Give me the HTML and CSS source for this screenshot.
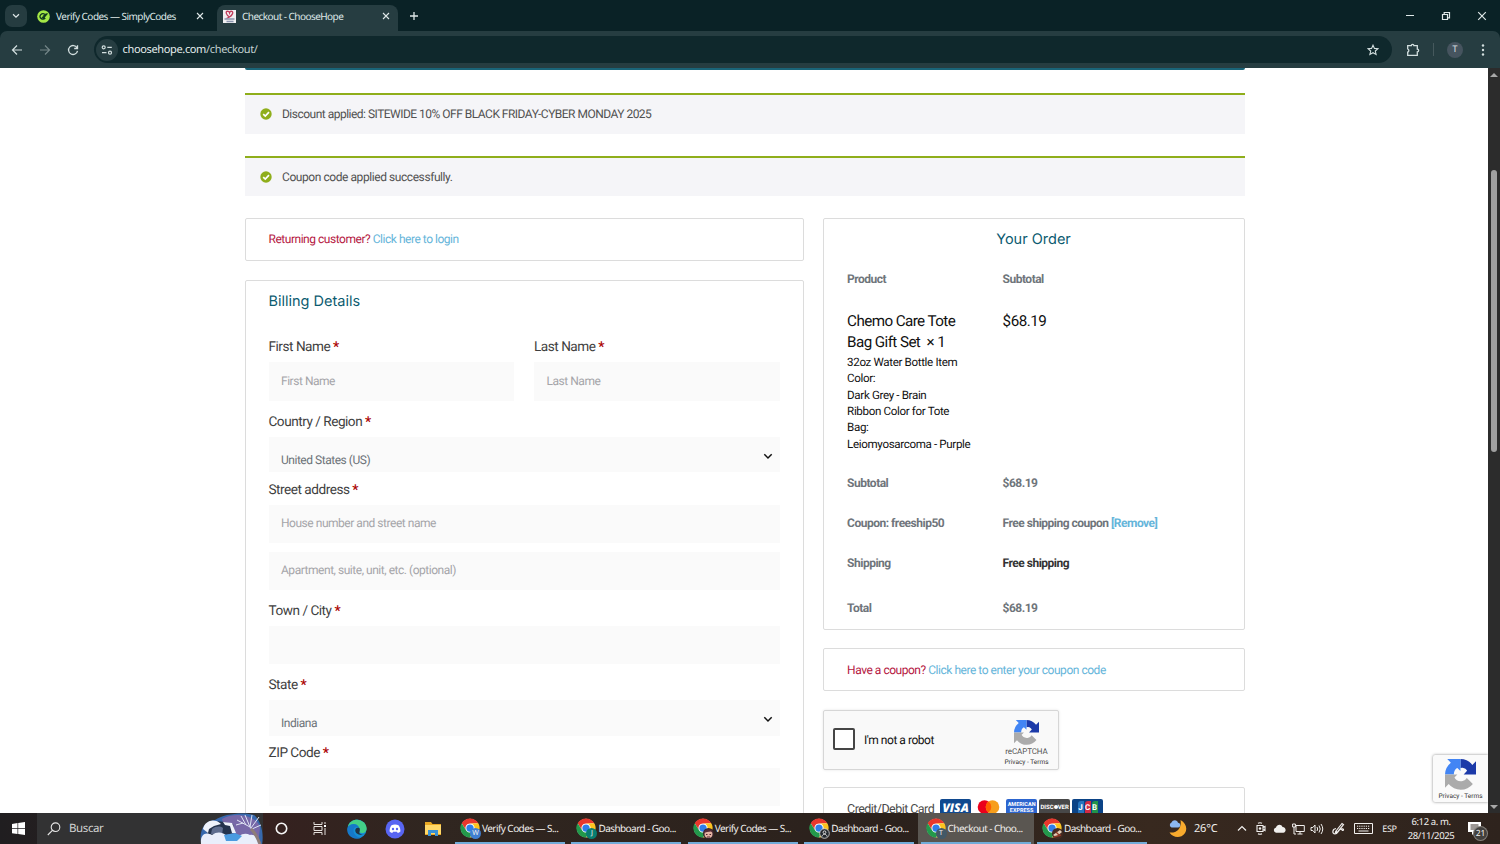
FILE: index.html
```html
<!DOCTYPE html>
<html lang="en">
<head>
<meta charset="utf-8">
<title>Checkout - ChooseHope</title>
<link rel="stylesheet" href="styles.css">
</head>
<body>
<svg class="defs" aria-hidden="true">
  <symbol id="chrome" viewBox="0 0 48 48">
    <circle cx="24" cy="24" r="22" fill="#fff"/>
    <path d="M4.070 12.500A23 23 0 0 1 43.900 12.500L24 13A11 11 0 0 0 14.500 29.500Z" fill="#e8372c"/>
    <path d="M43.900 12.500A23 23 0 0 1 24 47L33.500 29.500A11 11 0 0 0 24 13Z" fill="#fcc31e"/>
    <path d="M24 47A23 23 0 0 1 4.070 12.500L14.500 29.500A11 11 0 0 0 33.500 29.500Z" fill="#23994b"/>
    <circle cx="24" cy="24" r="8.700" fill="#2f7de9"/>
  </symbol>
  <symbol id="recaptcha" viewBox="0 0 64 64">
    <path d="M64 31.960V4.600l-7.600 7.600A32 32 0 0 0 31.900 0v18.400a14 14 0 0 1 4.300-.4c5 .5 8 3.500 9.400 6.500L38.500 32Z" fill="#1c3aa9"/>
    <path d="M31.900 0H4.600l7.500 7.600A32 32 0 0 0 0 32h18.400a14 14 0 0 1 .4-4.400c1-5 3.800-8 6.700-9.200L31.900 25Z" fill="#4285f4"/>
    <path d="M0 32v27.400l7.600-7.600A32 32 0 0 0 57.500 51.500L45 39a14 14 0 0 1-8.500 6.600c-9 2-14-3-17-7.600L25.500 32Z" fill="#ababab"/>
  </symbol>
  <symbol id="check" viewBox="0 0 12 12">
    <circle cx="6" cy="6" r="5.700" fill="#8fae1b"/>
    <path d="m3.200 6.100 2.100 2 3.700-3.900" fill="none" stroke="#fff" stroke-width="1.700"/>
  </symbol>
  <symbol id="close" viewBox="0 0 8 8"><path d="m1 1 6 6M7 1 1 7" stroke="currentColor" stroke-width="1.100" fill="none"/></symbol>
  <symbol id="down" viewBox="0 0 10 7"><path d="m1.300 1.300 3.700 3.700 3.700-3.700" fill="none" stroke="currentColor" stroke-width="1.500"/></symbol>
</svg>

<header class="tabstrip">
  <div class="tab-search"><svg width="8" height="6"><use href="#down"/></svg></div>
  <div class="tab">
    <svg width="13" height="13" viewBox="0 0 13 13"><circle cx="6.500" cy="6.500" r="6.300" fill="#a4e846"/><path d="M8 4.500A3 2.600 0 1 0 8.300 8M5 7l1.500 1 4-4.700M6 6.500l3.500-2.800" fill="none" stroke="#12391e" stroke-width="1.300"/></svg>
    <span class="tab-title">Verify Codes — SimplyCodes</span>
    <svg class="tab-x" width="8" height="8"><use href="#close"/></svg>
  </div>
  <div class="tab tab-active">
    <svg width="13" height="13" viewBox="0 0 13 13"><path fill="#f1eff2" d="M0 0h13v13H0z"/><path d="M6.500 7C3 5 2.200 1.300 4.500 1.200c1.200 0 1.800 1 2 1.600.2-1 1.200-1.700 2.300-1.500C11 2 9 5.500 6.500 7L3.500 8.500" fill="none" stroke="#c13b5b" stroke-width="1.300"/><path d="M1.500 9h10M3.500 11.500h7" stroke="#8b94ad" stroke-width="1.300"/></svg>
    <span class="tab-title">Checkout - ChooseHope</span>
    <svg class="tab-x" width="8" height="8"><use href="#close"/></svg>
  </div>
  <svg class="new-tab" width="10" height="10" viewBox="0 0 10 10"><path d="M5 1v8M1 5h8" stroke="currentColor" stroke-width="1.300"/></svg>
  <div class="window-controls">
    <svg width="10" height="10" viewBox="0 0 10 10"><path d="M1 4.500h8" stroke="currentColor"/></svg>
    <svg width="10" height="10" viewBox="0 0 10 10"><path d="M1.500 3.500h5v5h-5zM3.200 3.200V1.500h5.300v5.300H6.800" fill="none" stroke="currentColor" stroke-width="1.200"/></svg>
    <svg width="10" height="10" viewBox="0 0 10 10"><path d="m1.200 1.200 7.600 7.600M8.800 1.200 1.200 8.800" stroke="currentColor" stroke-width="1.200"/></svg>
  </div>
</header>

<nav class="toolbar">
  <div class="nav-buttons">
    <svg width="12" height="12" viewBox="0 0 12 12"><path d="M11 6H1.600M6 1.500 1.500 6 6 10.500" fill="none" stroke="currentColor" stroke-width="1.200"/></svg>
    <svg class="dim" width="12" height="12" viewBox="0 0 12 12"><path d="M1 6h9.400M6 1.500 10.500 6 6 10.500" fill="none" stroke="currentColor" stroke-width="1.200"/></svg>
    <svg width="12" height="12" viewBox="0 0 12 12"><path d="M10 3.800A4.500 4.500 0 1 0 10.500 6.800M10.500 1.200v3.300H7.200" fill="none" stroke="currentColor" stroke-width="1.300"/></svg>
  </div>
  <div class="omnibox">
    <div class="site-info"><svg width="12" height="10" viewBox="0 0 12 10"><g fill="none" stroke="currentColor" stroke-width="1.200"><circle cx="2.700" cy="2.300" r="1.500"/><path d="M6.300 2.300h4.500M1 7.700h4.500"/><circle cx="9" cy="7.700" r="1.500"/></g></svg></div>
    <span class="url">choosehope.com<span class="path">/checkout/</span></span>
    <svg class="star" width="12" height="12" viewBox="0 0 12 12"><path d="m6 1.200 1.450 3.200 3.500.35-2.650 2.300.8 3.450L6 8.700 2.900 10.500l.8-3.450-2.650-2.300 3.500-.35Z" fill="none" stroke="currentColor" stroke-width="1.100"/></svg>
  </div>
  <svg class="puzzle" width="14" height="14" viewBox="0 0 14 14"><path d="M1.700 2.700h3.600a1.300 1.300 0 0 1 2.600 0h3.400v3.500a1.300 1.300 0 0 1 0 2.700v3.400H1.700V9.200a1.700 1.700 0 0 0 0-3.200Z" fill="none" stroke="currentColor" stroke-width="1.300"/></svg>
  <i class="sep"></i>
  <span class="avatar">T</span>
  <svg class="kebab" width="4" height="14" viewBox="0 0 4 14"><g fill="currentColor"><circle cx="2" cy="2.500" r="1.200"/><circle cx="2" cy="7" r="1.200"/><circle cx="2" cy="11.500" r="1.200"/></g></svg>
</nav>

<div class="viewport">
  <main class="page">
    <div class="banner"></div>
    <div class="notice"><svg width="12" height="12"><use href="#check"/></svg><span>Discount applied: SITEWIDE 10% OFF BLACK FRIDAY-CYBER MONDAY 2025</span></div>
    <div class="notice"><svg width="12" height="12"><use href="#check"/></svg><span>Coupon code applied successfully.</span></div>
    <div class="columns">
      <section class="left">
        <div class="box toggle"><span class="ask">Returning customer?</span> <a>Click here to login</a></div>
        <form class="box billing">
          <h3>Billing Details</h3>
          <div class="pair">
            <div><label>First Name <b>*</b></label><div class="input tall">First Name</div></div>
            <div><label>Last Name <b>*</b></label><div class="input tall">Last Name</div></div>
          </div>
          <div class="field gap5"><label>Country / Region <b>*</b></label><div class="select">United States (US)<svg width="10" height="7"><use href="#down"/></svg></div></div>
          <div class="field gap2"><label>Street address <b>*</b></label><div class="input">House number and street name</div><div class="input second">Apartment, suite, unit, etc. (optional)</div></div>
          <div class="field gap5"><label>Town / City <b>*</b></label><div class="input"></div></div>
          <div class="field gap5"><label>State <b>*</b></label><div class="select state">Indiana<svg width="10" height="7"><use href="#down"/></svg></div></div>
          <div class="field gap1"><label>ZIP Code <b>*</b></label><div class="input"></div></div>
        </form>
      </section>
      <section class="right">
        <div class="box order">
          <h3>Your Order</h3>
          <div class="row head"><span>Product</span><span>Subtotal</span></div>
          <div class="row item">
            <div><div class="name">Chemo Care Tote<br>Bag Gift Set&nbsp; × 1</div>
            <div class="meta">32oz Water Bottle Item<br>Color:<br>Dark Grey - Brain<br>Ribbon Color for Tote<br>Bag:<br>Leiomyosarcoma - Purple</div></div>
            <div class="name price">$68.19</div>
          </div>
          <div class="row"><span>Subtotal</span><span>$68.19</span></div>
          <div class="row"><span>Coupon: freeship50</span><span>Free shipping coupon <a>[Remove]</a></span></div>
          <div class="row"><span>Shipping</span><span class="dark">Free shipping</span></div>
          <div class="row total"><span>Total</span><span>$68.19</span></div>
        </div>
        <div class="box toggle"><span class="ask">Have a coupon?</span> <a>Click here to enter your coupon code</a></div>
        <div class="captcha">
          <i class="checkbox"></i><span class="robot">I'm not a robot</span>
          <div class="brand"><svg width="25" height="25"><use href="#recaptcha"/></svg><span class="rc">reCAPTCHA</span><span class="pt">Privacy - Terms</span></div>
        </div>
        <div class="box payment">
          <span>Credit/Debit Card</span>
          <div class="card visa">VISA</div>
          <div class="card mc"><svg width="31" height="20" viewBox="0 0 31 20"><circle cx="11.500" cy="8" r="6.800" fill="#eb001b"/><circle cx="19.500" cy="8" r="6.800" fill="#f79e1b"/><path d="M15.500 2.500a6.800 6.800 0 0 1 0 11 6.800 6.800 0 0 1 0-11" fill="#ff5f00"/></svg></div>
          <div class="card amex">AMERICAN<br>EXPRESS</div>
          <div class="card disc">DISC<i></i>VER</div>
          <div class="card jcb"><i>J</i><i>C</i><i>B</i></div>
        </div>
      </section>
    </div>
  </main>
  <div class="scrollbar"><i class="up"></i><i class="thumb"></i><i class="dn"></i></div>
  <div class="badge"><svg width="31" height="31"><use href="#recaptcha"/></svg><span>Privacy - Terms</span></div>
</div>

<footer class="taskbar">
  <div class="start"><svg width="13" height="13" viewBox="0 0 13 13"><path d="M0 2 5.500 1.100V6.200H0ZM6.200 1 13 0v6.200H6.200ZM0 6.900h5.500V12L0 11.200ZM6.200 6.900H13V13l-6.800-.9Z" fill="#fff"/></svg></div>
  <div class="search">
    <svg width="14" height="14" viewBox="0 0 14 14"><circle cx="8.500" cy="5.200" r="4.300" fill="none" stroke="#e6e6e6" stroke-width="1.100"/><path d="m5.400 8.400-4.600 4.600" stroke="#e6e6e6" stroke-width="1.100"/></svg>
    <span>Buscar</span>
    <svg class="scene" width="63" height="31" viewBox="0 0 63 31">
      <path d="M1 29C-1 18 4 8 15 7 24 0 46-1 54 2c7 5 10 19 8 29H1Z" fill="#3768ad"/>
      <path d="M22 6c12-8 36-4 38 9L58 31H28Z" fill="#7768a8"/>
      <path d="M5 17c2-9 12-10 19-8l9 2 2 9-24 5Z" fill="#24334d"/>
      <path d="M3 16c2-9 12-11 18-5l-7 2-5 3-1 4ZM23 9l9 1 4 10h-4l-2-7-5-1Z" fill="#eef2fb"/>
      <path d="M12 16c4-3 8-3 11-1l-1 7-11-1Z" fill="#5f6d8f"/>
      <path d="M1 31c-1-9 4-13 11-9 5-4 11-3 15 1 6-4 12 0 12 8ZM36 31c1-10 9-12 14-9 5-1 8 3 8 9Z" fill="#e9eefb"/>
      <path d="m24 22 11-2 7 3-5 5H26Z" fill="#4a9be0"/>
      <path d="M59 31c-3-7-5-12-9-17M50 14 37 7M50 14 45 2M50 14l2-12M51 15l8-11M52 16l9-4M43 10l-7 2M46 12l-5-9" stroke="#dfe4f4" fill="none"/>
      <path d="M60 31c-3-7-5-12-9-15" stroke="#8d7c78" stroke-width="3" fill="none"/>
    </svg>
  </div>
  <div class="pins">
    <svg width="13" height="13" viewBox="0 0 13 13"><circle cx="6.500" cy="6.500" r="5.200" fill="none" stroke="#f5f5f5" stroke-width="1.600"/></svg>
    <svg width="14" height="13" viewBox="0 0 14 13"><path d="M1 0v2.500h8V0M1 13v-2.500h8V13M1 4.500h8v4H1ZM12 0v2M12 6v7" fill="none" stroke="#e5e0dc"/><path d="M11 3h2v2h-2z" fill="#fff"/></svg>
    <svg width="20" height="20" viewBox="0 0 20 20"><circle cx="10" cy="10" r="9.500" fill="#168ed4"/><path d="M.7 8C2 2 8-.5 13 1.200c5 1.800 7.500 6 6.400 10-1 3-5.400 3.500-6.900 2-1-1 .5-1.500 0-3.700C11.500 5 4 3.500.7 8Z" fill="#43cf88"/><path d="M.7 8C4 4 10 4 12 8.500c-3-1.500-6 0-5.500 4 .4 3 4 6.500 8 5.900C8 22-2 17 .7 8Z" fill="#1678c9"/><path d="M12.500 9c-3-1.200-5 1-4 3.800 1 3 6 4 10 1.200-2 2-6.500 1.200-6.200-.5.200-1 1-2 .2-4.500Z" fill="#203345"/></svg>
    <svg width="20" height="20" viewBox="0 0 20 20"><circle cx="10" cy="10" r="9.500" fill="#5865f2"/><path d="M6.500 6.200c2-.9 5-.9 7 0 1.500 2 2 4 1.900 6.300-.8.800-1.700 1.200-2.700 1.400l-.7-1.200H8l-.7 1.200c-1-.2-1.900-.6-2.700-1.400-.1-2.300.4-4.300 1.900-6.300Z" fill="#fff"/><circle cx="8" cy="10" r="1.200" fill="#5865f2"/><circle cx="12" cy="10" r="1.200" fill="#5865f2"/></svg>
    <svg width="18" height="16" viewBox="0 0 18 16"><path d="M1 1h6l1.500 2H17v11H1Z" fill="#e9a823"/><path d="M1 4h16v9H1Z" fill="#ffd869"/><path d="M4 9h10v6h-3v-3H7v3H4Z" fill="#3a91d5"/></svg>
  </div>
  <div class="apps">
    <div class="app"><span class="ico"><svg width="20" height="20"><use href="#chrome"/></svg><i class="p1">W</i></span>Verify Codes — S...</div>
    <div class="app"><span class="ico"><svg width="20" height="20"><use href="#chrome"/></svg><i class="p2">J</i></span>Dashboard - Goo...</div>
    <div class="app"><span class="ico"><svg width="20" height="20"><use href="#chrome"/></svg><i class="p3"><svg width="11" height="11" viewBox="0 0 11 11"><circle cx="5.500" cy="6" r="4" fill="#e5b3a3"/><path d="M1 5C1 0 10 0 10 5L8 3.500 4 4Z" fill="#542b35"/><path d="M3 6.500h1.500M6.500 6.500H8M4 9h3" stroke="#54272c"/></svg></i></span>Verify Codes — S...</div>
    <div class="app"><span class="ico"><svg width="20" height="20"><use href="#chrome"/></svg><i class="p4"><svg width="11" height="11" viewBox="0 0 11 11"><circle cx="5.500" cy="5.500" r="4.800" fill="#24292e" stroke="#ddd" stroke-width=".8"/><circle cx="5.500" cy="4.300" r="1.400" fill="none" stroke="#ddd"/><path d="M3 8.500c.5-3 4.500-3 5 0" fill="none" stroke="#ddd"/></svg></i></span>Dashboard - Goo...</div>
    <div class="app app-active"><span class="ico"><svg width="20" height="20"><use href="#chrome"/></svg><i class="p5">T</i></span>Checkout - Choo...</div>
    <div class="app"><span class="ico"><svg width="20" height="20"><use href="#chrome"/></svg><i class="p6"><svg width="11" height="11" viewBox="0 0 11 11"><path d="m1 7 7-5 2 2-6 5Z" fill="#e1ceb8"/><path d="m2 9 7-2M4 4l3 3" stroke="#903926" stroke-width="1.400"/></svg></i></span>Dashboard - Goo...</div>
  </div>
  <div class="weather">
    <svg width="19" height="19" viewBox="0 0 19 19"><path d="M12.500 1C20 5 20 14 13.500 17.200 9 19 4 17.500 1.500 13.500 9 14.500 14 9 12.500 1Z" fill="#f8aa2d"/><path d="M3.500 8.500a2.700 2.700 0 0 1 0-5C5 0 9.500.7 10 3.700c3 .3 3 4.600 0 4.800Z" fill="#8cb8f0"/></svg>
    <span>26°C</span>
  </div>
  <div class="tray">
    <svg width="10" height="7" viewBox="0 0 10 7"><path d="m1 5.500 4-4 4 4" fill="none" stroke="currentColor" stroke-width="1.200"/></svg>
    <svg width="10" height="13" viewBox="0 0 10 13"><path d="M1 3.500h6v6H1ZM7 5.500l2-1v4l-2-1M2 1.200q2-1 4 0M2 11.800q2 1 4 0" fill="none" stroke="currentColor" stroke-width="1.100"/><circle cx="4" cy="6.500" r="1.200" fill="currentColor"/></svg>
    <svg width="13" height="9" viewBox="0 0 13 9"><path d="M3 8.700a2.700 2.700 0 0 1 0-5.300C4 0 8.500-.2 9.500 3c4 0 4 5.500.8 5.700Z" fill="#f0efed"/></svg>
    <svg width="13" height="12" viewBox="0 0 13 12"><path d="M4 2.500h8.300v6H4ZM8 8.500V11M5.500 11h5M.6 1h2.800v3H.6ZM2 4v7h2" fill="none" stroke="currentColor"/></svg>
    <svg width="14" height="12" viewBox="0 0 14 12"><path d="M1 4.500h1.800L5 2v8L2.800 7.500H1ZM7 4q1.300 2 0 4M9 2.500q2.500 3.500 0 7M11 1q3.500 5 0 10" fill="none" stroke="currentColor"/></svg>
    <svg width="13" height="14" viewBox="0 0 13 14"><path d="M4 9 10 1.500l1.500 1.200L6 9.500 3.500 10.500ZM4 6.500C0 7 0 12 3 12s3-4 6-5 3 1.500 1.500 1.500L8 6" fill="none" stroke="currentColor" stroke-width="1.200"/></svg>
    <svg width="19" height="11" viewBox="0 0 19 11"><path d="M.5.500h18v10H.5Z" fill="none" stroke="currentColor"/><path d="M3 3.200h13M3 5.500h13" stroke="currentColor" stroke-dasharray="1.200 1"/><path d="M4.500 8h10" stroke="currentColor"/></svg>
    <span class="lang">ESP</span>
    <div class="clock">6:12 a. m.<br>28/11/2025</div>
    <div class="notif"><svg width="13" height="13" viewBox="0 0 13 13"><path d="M0 0h13v10H7l-3 3v-3H0Z" fill="#fff"/><path d="M2.500 3h8M2.500 5h8M2.500 7h5" stroke="#3b302b"/></svg><i>21</i></div>
  </div>
</footer>
</body>
</html>
```

FILE: styles.css
```css
* { box-sizing: border-box; }
body { margin: 0; width: 1500px; height: 844px; overflow: hidden; display: flex; flex-direction: column; background: #fff; font-family: Roboto, sans-serif; text-rendering: geometricPrecision; }
svg { display: block; flex: none; }
i { font-style: normal; }
.defs { position: absolute; width: 0; height: 0; }

/* browser chrome */
.tabstrip { position: relative; z-index: 1; height: 31px; flex: none; display: flex; align-items: center; background: #0a2226; color: #dfe8e8; font: 10px "Noto Sans", sans-serif; padding-left: 5px; }
.tab-search { width: 22px; height: 22px; border-radius: 7px; background: #253c40; display: flex; align-items: center; justify-content: center; margin-right: 4px; }
.tab { width: 186px; height: 26px; margin-top: 5px; padding: 0 13px 4px 6px; display: flex; align-items: center; gap: 6px; }
.tab-title { flex: 1; white-space: nowrap; letter-spacing: -.53px; }
.tab-active { width: 181px; padding-right: 8px; background: #263d41; border-radius: 8px 8px 0 0; }
.new-tab { margin-left: 11px; }
.window-controls { margin-left: auto; display: flex; gap: 26px; padding-right: 13px; }
.toolbar { height: 37px; flex: none; display: flex; align-items: center; background: #263d41; color: #d3dfdf; border-radius: 7px 7px 0 0; box-shadow: 0 -8px 0 #0a2226; padding-left: 11px; }
.nav-buttons { display: flex; gap: 16px; width: 83px; }
.dim { opacity: .45; }
.omnibox { width: 1298px; height: 27px; border-radius: 14px; background: #0f282c; display: flex; align-items: center; padding: 0 13px 0 2px; }
.site-info { width: 22px; height: 22px; border-radius: 50%; background: #263d41; display: flex; align-items: center; justify-content: center; }
.url { flex: 1; margin-left: 4.500px; font: 11px "Noto Sans", sans-serif; letter-spacing: -.35px; color: #e6eeee; }
.path { color: #c3d1d1; }
.tab-active .tab-title { letter-spacing: -.55px; }
.puzzle { margin-left: 14px; }
.sep { width: 1px; height: 13px; background: #46595d; margin-left: 13px; }
.avatar { width: 16px; height: 16px; margin-left: 13px; border-radius: 50%; background: #46545f; color: #d9e0e5; font-size: 9px; line-height: 16px; text-align: center; }
.kebab { margin-left: 18px; }

/* page */
.viewport { position: relative; height: 745px; flex: none; overflow: hidden; display: flex; justify-content: space-between; }
.page { width: 1000px; margin-left: 244.500px; letter-spacing: -.47px; }
.banner { height: 2px; background: #1a6478; border-radius: 0 0 2px 2px; margin-bottom: 23px; }
.notice { height: 40.500px; border-top: 2.500px solid #8fae1b; background: #f5f5f8; display: flex; align-items: center; gap: 10.500px; padding: 0 0 0 15px; margin-bottom: 22px; font-size: 12px; letter-spacing: -.51px; color: #515151; }
.notice + .notice { letter-spacing: -.43px; }
.columns { display: flex; justify-content: space-between; align-items: flex-start; }
.left { width: 559.500px; }
.right { width: 422px; }
.box { border: 1px solid #dcdcdc; border-radius: 2px; }
.toggle { height: 43px; padding-left: 23px; font-size: 12px; line-height: 41px; margin-bottom: 19px; }
.ask { color: #b5173f; }
a { color: #65b5da; }
h3 { margin: 0; color: #0c5b70; font: 400 14.500px/41px Inter, sans-serif; letter-spacing: 0; }
.billing { height: 620px; padding: 0 23px; }
.billing h3 { height: 51px; }
.pair { display: grid; grid-template-columns: 245px 246px; justify-content: space-between; }
label { display: block; height: 31px; font-size: 13.600px; letter-spacing: -.48px; line-height: 32px; color: #3f3f3f; }
label b { color: #a00; }
.pair label { height: 30px; line-height: 31px; }
.input { height: 38px; background: #fafafa; padding-left: 12.500px; font-size: 12px; line-height: 37px; color: #a5a5a9; }
.tall { height: 39px; line-height: 38px; }
.second { margin-top: 9px; }
.select { height: 35px; background: #fafafa; padding: 9px 7px 0 12.500px; display: flex; justify-content: space-between; align-items: flex-start; font-size: 12px; line-height: 28px; color: #6c7278; }
.select svg { margin-top: 7px; color: #111; }
.state { height: 36px; }
.gap5 { margin-top: 5px; }
.gap2 { margin-top: 2px; }
.gap1 { margin-top: 1px; }

.order { height: 412px; padding: 0 23.600px; margin-bottom: 18.300px; }
.right .toggle { padding-left: 23.600px; line-height: 42px; margin-bottom: 18.500px; }
.order h3 { text-align: center; height: 40px; line-height: 42px; }
.row { display: grid; grid-template-columns: 155.500px 1fr; height: 40px; line-height: 40px; font-size: 12px; font-weight: 700; letter-spacing: -.5px; color: #6f757b; }
.row.item { height: 164px; font-weight: 400; color: #111; padding-top: 12px; }
.name { font-size: 15.200px; letter-spacing: -.58px; line-height: 21px; }
.price { letter-spacing: -.5px; }
.meta { font-size: 11.600px; letter-spacing: -.35px; line-height: 16.400px; padding-top: .8px; }
.row .dark { color: #333; }
.total { padding-top: 5px; }
.captcha { width: 236px; height: 60px; background: #f9f9f9; border: 1px solid #d6d6d6; border-radius: 2px; box-shadow: 0 0 3px rgba(0,0,0,.1); display: flex; align-items: center; padding-left: 9px; margin-bottom: 17px; }
.checkbox { width: 22px; height: 22px; border: 2px solid #454545; border-radius: 2px; background: #fff; margin-top: -2px; }
.robot { font-size: 12px; margin-left: 9.500px; color: #111; flex: 1; }
.brand { width: 62px; display: flex; flex-direction: column; align-items: center; padding-top: 6px; color: #555; letter-spacing: 0; }
.rc { font-size: 8px; line-height: 13px; letter-spacing: -.1px; }
.pt { font-size: 6.500px; line-height: 8px; color: #333; }
.payment { height: 60px; display: flex; align-items: flex-start; padding: 11px 23.600px; font-size: 12.500px; letter-spacing: -.5px; line-height: 22px; color: #4a4a4a; white-space: nowrap; }
.payment span { width: 93px; letter-spacing: -.55px; }
.card { width: 31px; height: 20px; margin-right: 2px; border-radius: 2px; overflow: hidden; color: #fff; text-align: center; font-weight: 700; letter-spacing: 0; }
.visa { background: #10498f; font: italic 800 12px/18px "Open Sans", sans-serif; }
.amex { background: #2c65cf; font-size: 5.500px; line-height: 6px; padding-top: 3px; }
.disc { background: #484848; font-size: 6px; line-height: 17px; }
.disc i { display: inline-block; width: 4px; height: 4px; border-radius: 50%; background: #fff; }
.jcb { background: #0b4386; display: flex; justify-content: center; gap: 1px; padding-top: 2px; }
.jcb i { width: 6px; height: 16px; font-size: 8px; line-height: 13px; background: #2674bd; border-radius: 3px 0 3px 0; }
.jcb i:nth-child(2) { background: #d32b45; }
.jcb i:nth-child(3) { background: #21944b; }

.scrollbar { width: 12px; background: #2c2c2c; display: flex; flex-direction: column; align-items: center; padding: 5px 0 4px; }
.up { border: 4px solid transparent; border-top: 0; border-bottom: 4px solid #a8a8a8; }
.dn { border: 4px solid transparent; border-bottom: 0; border-top: 4px solid #a8a8a8; margin-top: auto; }
.thumb { width: 6px; height: 282px; border-radius: 3px; background: #a0a0a0; margin-top: 93px; }
.badge { position: absolute; right: 12px; bottom: 11px; width: 55px; height: 47px; background: #fafafa; border-radius: 2px 0 0 2px; box-shadow: 0 0 3px #888; display: flex; flex-direction: column; align-items: center; padding-top: 4px; font-size: 6.500px; line-height: 12px; color: #333; clip-path: inset(-4px 0 -4px -4px); }

/* taskbar */
.taskbar { height: 31px; flex: none; display: flex; align-items: center; background: linear-gradient(90deg, #201e20 0, #35211f 270px, #302620 430px, #2b211c 900px, #38291f 1150px, #2e231d 1500px); color: #f2f0ee; font: 10px "Noto Sans", sans-serif; }
.start { width: 37px; padding-left: 12px; }
.search { width: 226px; height: 31px; background: #323233; display: flex; align-items: center; padding-left: 10px; color: #d2d2d2; font-size: 11.500px; letter-spacing: -.4px; }
.search span { margin-left: 8px; flex: 1; }
.pins { width: 192px; display: grid; grid-template-columns: repeat(5, 37.700px); place-items: center; }
.apps { width: 698px; display: grid; grid-template-columns: repeat(6, 110px); column-gap: 6.400px; }
.app { height: 31px; display: flex; align-items: center; gap: 2px; padding-left: 5px; border-bottom: 2px solid #72acd9; white-space: nowrap; font-size: 10px; letter-spacing: -.56px; }
.app-active { background: #5a5651; box-shadow: -3px 0 0 #5a5651, 3px 0 0 #5a5651; }
.ico { position: relative; width: 20px; height: 20px; }
.ico i { position: absolute; right: -1px; bottom: -1px; width: 11px; height: 11px; border-radius: 50%; text-align: center; font-size: 7px; line-height: 11px; letter-spacing: 0; }
.p1 { background: #3f7ed0; }
.p2 { background: #087d70; }
.p3 { background: #37262b; }
.p5 { background: #435967; }
.p6 { background: #442b22; }
.weather { width: 79px; display: flex; align-items: center; gap: 7px; padding-left: 15px; font-size: 11px; letter-spacing: -.2px; white-space: nowrap; }
.tray { display: grid; grid-template-columns: 19px 19px 18.500px 19px 19px 23px 27px 26px 57px 30px; place-items: center; width: 262px; }
.lang { font-size: 9px; letter-spacing: -.3px; }
.clock { font-size: 9.500px; letter-spacing: -.4px; line-height: 14px; text-align: center; white-space: nowrap; }
.notif { position: relative; }
.notif i { position: absolute; left: 6px; top: 5px; width: 13px; height: 13px; border-radius: 50%; background: #42403e; box-shadow: 0 0 0 1px #85807b; font-size: 8.500px; line-height: 13px; text-align: center; }
```
